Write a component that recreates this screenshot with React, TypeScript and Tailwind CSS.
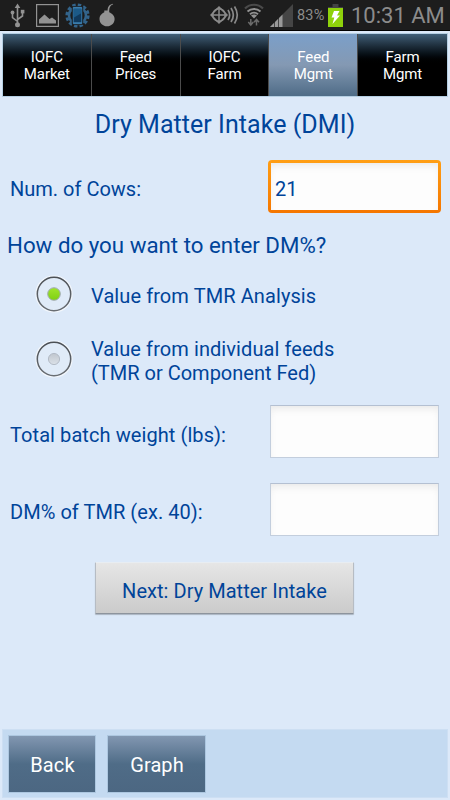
import { useState } from 'react';
import clsx from 'clsx';

const tabs = [
  { id: 'iofc-market', lines: ['IOFC', 'Market'] },
  { id: 'feed-prices', lines: ['Feed', 'Prices'] },
  { id: 'iofc-farm', lines: ['IOFC', 'Farm'] },
  { id: 'feed-mgmt', lines: ['Feed', 'Mgmt'] },
  { id: 'farm-mgmt', lines: ['Farm', 'Mgmt'] },
];

function UsbIcon() {
  return (
    <svg className="ml-[10px]" width="15" height="25" viewBox="0 0 15 25" fill="none" stroke="#929292" strokeWidth="1.6">
      <path d="M7.500 4v17M2.500 10v4.500l5 4M12.500 9v4l-5 3.500" />
      <path d="M7.500 0.500l2.800 4.500H4.700z" fill="#929292" stroke="none" />
      <circle cx="2.500" cy="9.500" r="1.900" fill="#929292" stroke="none" />
      <path d="M10.800 6.800h3.600v3.600h-3.600z" fill="#929292" stroke="none" />
      <circle cx="7.500" cy="21.700" r="2.500" fill="#929292" stroke="none" />
    </svg>
  );
}

function GalleryIcon() {
  return (
    <svg className="ml-[11px]" width="23" height="23" viewBox="0 0 23 23">
      <rect x="0.600" y="0.600" width="21.800" height="21.800" fill="none" stroke="#929292" strokeWidth="1.200" />
      <path d="M3 19.500v-4l5.500-5 5 4.500 2.500-1.500 4 3v3z" fill="#929292" />
    </svg>
  );
}

function GearPhoneIcon() {
  return (
    <svg className="ml-[6px]" width="25" height="25" viewBox="0 0 25 25">
      <circle cx="12.500" cy="12.500" r="10.700" fill="none" stroke="#33648b" strokeWidth="2.800" strokeDasharray="3.400 2.203" />
      <circle cx="12.500" cy="12.500" r="8.500" fill="none" stroke="#33648b" strokeWidth="2.600" />
      <rect x="6.800" y="3.200" width="11.400" height="18.600" rx="1" fill="#1a1d20" />
      <rect x="7.800" y="4" width="9.400" height="17" rx="0.800" fill="#3a7cab" />
      <rect x="8.700" y="5.800" width="7.600" height="13.400" fill="#103a5e" />
      <path d="M8.700 5.800h7.600v4.500l-7.600 4.500z" fill="#1c5a88" />
    </svg>
  );
}

function BombIcon() {
  return (
    <svg className="ml-[9px]" width="17" height="24" viewBox="0 0 17 24">
      <path d="M0.500 16c0-3.500 2.500-5.500 4.800-6.700V7.500h3.300c.1-3.500 1.400-6 5.100-6.800l.5.600c-3 1.200-4 3.300-4 6.200v1.800c3 1.400 5.400 3.400 5.400 6.700 0 4.300-3.400 7.300-7.500 7.300S.5 20.300.5 16z" fill="#939393" />
    </svg>
  );
}

function NfcIcon() {
  return (
    <svg width="30" height="22" viewBox="0 0 30 22" fill="none" stroke="#8a8a8a">
      <path d="M1 11l8-8 8 8-8 8z" strokeWidth="1.500" />
      <circle cx="9" cy="11" r="6.300" strokeWidth="1.500" />
      <path d="M9 3v16M1 11h16" strokeWidth="1.500" />
      <path d="M18 6c2 3 2 7 0 10M21 4c3 4.500 3 9.500 0 14M24.500 2.500c3.600 5.500 3.600 11.500 0 17" strokeWidth="1.700" />
    </svg>
  );
}

function WifiIcon() {
  return (
    <svg className="ml-[4px]" width="20" height="24" viewBox="0 0 20 24" fill="none">
      <path d="M1 5.500c5-5 13-5 18 0" stroke="#4a4a4a" strokeWidth="2.200" />
      <path d="M3.500 8.500c3.700-3.500 9.300-3.500 13 0M6 11.300c2.300-2 5.700-2 8 0" stroke="#929292" strokeWidth="2" />
      <path d="M10 15.500l-3-3c1.800-1.300 4.200-1.300 6 0z" fill="#929292" />
      <path d="M6.800 16v6M4.300 19.100l2.500 2.900 2.500-2.900M12.500 22.500v-6M10 19.300l2.500-2.900 2.500 2.900" stroke="#6c6c6c" strokeWidth="1.500" />
    </svg>
  );
}

function SignalIcon() {
  return (
    <svg className="ml-[6px]" width="23" height="23" viewBox="0 0 23 23">
      <path d="M23 0v23H0z" fill="#454545" />
      <path d="M0 23l4-4v4zM5 23v-5l3-3v8zM9 23v-9l3.500-3.500V23z" fill="#999" />
    </svg>
  );
}

function BatteryIcon() {
  return (
    <svg className="ml-[3px]" width="15" height="23" viewBox="0 0 15 23">
      <path d="M4.500 0h6v3H15v4H0V3h4.500z" fill="#434343" />
      <path d="M0 4h15v19H0z" fill="#8fd20b" />
      <path d="M6 7h5.500L9 11.500h3L4.500 20l1.800-6.500H3.500z" fill="#fff" />
    </svg>
  );
}

function StatusBar() {
  return (
    <div className="flex h-[31px] shrink-0 items-center border-b border-black bg-[#1d1d1d] text-[#8c8c8c]">
      <UsbIcon />
      <GalleryIcon />
      <GearPhoneIcon />
      <BombIcon />
      <div className="ml-auto flex items-center pr-[5px]">
        <NfcIcon />
        <WifiIcon />
        <SignalIcon />
        <span className="ml-[4px] w-[28px] pt-[2px] text-[14.500px] tracking-[0.200px] whitespace-nowrap">83%</span>
        <BatteryIcon />
        <span className="ml-[8px] w-[94px] text-[22px] whitespace-nowrap">10:31 AM</span>
      </div>
    </div>
  );
}

function RadioButton({ checked }: { checked: boolean }) {
  return (
    <svg className="shrink-0" width="38" height="38" viewBox="0 0 38 38">
      <defs>
        <linearGradient id="ring" x1="0" y1="0" x2="0" y2="1">
          <stop offset="0" stopColor="#4c5055" />
          <stop offset="1" stopColor="#6a6e73" />
        </linearGradient>
        <linearGradient id="dotOn" x1="0" y1="0" x2="0" y2="1">
          <stop offset="0" stopColor="#a0e52c" />
          <stop offset="1" stopColor="#7fd012" />
        </linearGradient>
        <linearGradient id="dotOff" x1="0" y1="0" x2="0" y2="1">
          <stop offset="0" stopColor="#c0c6ce" />
          <stop offset="1" stopColor="#dbe1e8" />
        </linearGradient>
      </defs>
      <circle cx="19" cy="19" r="18" fill="none" stroke="#f3f7fc" strokeWidth="1.200" />
      <circle cx="19" cy="19" r="16.700" fill="#e0ebf8" stroke="url(#ring)" strokeWidth="1.500" />
      {checked ? (
        <circle cx="19" cy="19" r="6.300" fill="url(#dotOn)" stroke="#a3aab8" strokeWidth="1" />
      ) : (
        <circle cx="19" cy="19" r="5.600" fill="url(#dotOff)" stroke="#a9b1bc" strokeWidth="0.800" />
      )}
    </svg>
  );
}

const fieldClass =
  'h-[53px] w-[169px] border border-[#c3cedd] border-t-[#b4c0d2] bg-[#fdfdfd] shadow-[inset_0_5px_8px_-3px_#e6e6e6] outline-none';

export default function App() {
  const [activeTab, setActiveTab] = useState('feed-mgmt');
  const [method, setMethod] = useState('tmr');
  const [cows, setCows] = useState('21');

  return (
    <div className="flex h-[800px] w-[450px] flex-col overflow-hidden bg-[#dce9f9] font-['Roboto',sans-serif] text-[20px] text-[#004499]">
      <StatusBar />

      <nav className="mx-[2px] mt-[2px] grid h-[64px] shrink-0 grid-cols-5 border border-[#b5cfe3]">
        {tabs.map((tab, i) => (
          <button
            key={tab.id}
            onClick={() => setActiveTab(tab.id)}
            className={clsx(
              'flex flex-col items-center justify-center pt-[2px] text-[15px] leading-[17.500px] tracking-[-0.1px] text-white',
              i < tabs.length - 1 && 'border-r-[1.500px] border-[#4b4b4b]',
              activeTab === tab.id
                ? 'bg-linear-to-b from-[#7b9fc9] via-[#8499b3] to-[#4f6c87]'
                : 'bg-linear-to-b from-[#426079] to-black to-50%'
            )}
          >
            {tab.lines.map((line) => (
              <span key={line}>{line}</span>
            ))}
          </button>
        ))}
      </nav>

      <main className="flex grow flex-col">
        <h1 className="mt-[12px] text-center text-[25px] leading-[32px] tracking-[0.050px]">Dry Matter Intake (DMI)</h1>

        <div className="mt-[19px] flex h-[53px] items-start justify-between pr-[9px] pl-[10px]">
          <label htmlFor="cows" className="pt-[14px]">Num. of Cows:</label>
          <div className="h-[53px] w-[173px] rounded-[4px] bg-linear-to-b from-[#ff9e14] to-[#f57600] p-[3px]">
            <input
              id="cows"
              value={cows}
              onChange={(e) => setCows(e.target.value)}
              className="h-full w-full bg-[#fdfdfd] pt-[5px] pl-[4px] shadow-[inset_0_5px_8px_-3px_#e6e6e6] outline-none"
            />
          </div>
        </div>

        <h2 className="mt-[18px] pl-[7px] text-[22.300px] leading-[28px]">How do you want to enter DM%?</h2>

        <div className="mt-[16px] flex items-center pl-[35px]" onClick={() => setMethod('tmr')}>
          <RadioButton checked={method === 'tmr'} />
          <span className="pt-[4px] pl-[18px] tracking-[0.090px]">Value from TMR Analysis</span>
        </div>
        <div className="mt-[20px] flex items-center pl-[35px]" onClick={() => setMethod('feeds')}>
          <RadioButton checked={method === 'feeds'} />
          <span className="pt-[4px] pl-[18px] leading-[24px]">
            <span className="tracking-[0.080px]">Value from individual feeds</span>
            <br />
            (TMR or Component Fed)
          </span>
        </div>

        <div className="mt-[20px] flex items-center justify-between pr-[11px] pl-[10px]">
          <label htmlFor="weight" className="pt-[6px] tracking-[0.080px]">Total batch weight (lbs):</label>
          <input id="weight" className={fieldClass} />
        </div>
        <div className="mt-[25px] flex items-center justify-between pr-[11px] pl-[10px]">
          <label htmlFor="dm" className="pt-[5px] tracking-[0.050px]">DM% of TMR (ex. 40):</label>
          <input id="dm" className={fieldClass} />
        </div>

        <button className="mt-[26px] ml-[95px] h-[52px] w-[259px] rounded-[1px] border border-[#b6bcc4] border-t-[#e8edf2] border-b-[#8d949d] bg-linear-to-b from-[#e6e6e6] to-[#cbcbcb] pt-[5px] tracking-[0.040px] shadow-[0_1px_1px_#aab4c0]">
          Next: Dry Matter Intake
        </button>
      </main>

      <footer className="mx-[2px] mb-[2px] flex h-[69px] shrink-0 gap-[11px] border border-[#cddff3] bg-[#c4daf1] px-[5px] pt-[5px] text-white">
        <button className="h-[58px] w-[88px] border border-[#adc7e0] bg-linear-to-b from-[#8297b1] via-[#4f6c87] to-[#4c6782] pt-[1px] pl-[1px] tracking-[0.100px]">
          Back
        </button>
        <button className="h-[58px] w-[99px] border border-[#adc7e0] bg-linear-to-b from-[#8297b1] via-[#4f6c87] to-[#4c6782] pt-[1px] pl-[1px] tracking-[0.100px]">
          Graph
        </button>
      </footer>
    </div>
  );
}
